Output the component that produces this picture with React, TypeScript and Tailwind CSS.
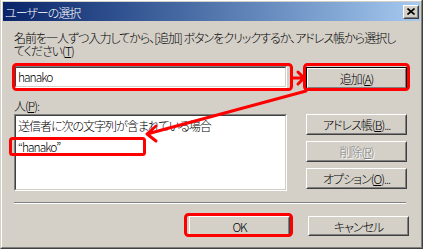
import React from "react";

const FONT =
  "font-['Noto_Sans_CJK_JP','Liberation_Sans',sans-serif] font-light [font-feature-settings:'palt'] tracking-[-1px]";

function U({ children }: { children: React.ReactNode }) {
  return <span className="underline underline-offset-[1px] decoration-1">{children}</span>;
}

function Btn({
  children,
  className = "",
  def = false,
  disabled = false,
}: {
  children: React.ReactNode;
  className?: string;
  def?: boolean;
  disabled?: boolean;
}) {
  const outer = def
    ? "border border-black"
    : "border border-t-white border-l-white border-r-[#404040] border-b-[#404040]";
  const inner = def
    ? "border border-t-white border-l-white border-r-[#808080] border-b-[#808080]"
    : "border border-t-[#D4D0C8] border-l-[#D4D0C8] border-r-[#808080] border-b-[#808080]";
  return (
    <div className={`flex shrink-0 ${outer} ${className}`}>
      <div
        className={`flex flex-1 items-center justify-center ${inner} text-[12px] leading-[13px] ${
          disabled ? "text-[#808080] [text-shadow:1px_1px_0_#ffffff]" : "text-black"
        }`}
      >
        {children}
      </div>
    </div>
  );
}

function Sunken({ children, className = "" }: { children?: React.ReactNode; className?: string }) {
  return (
    <div
      className={`flex border border-t-[#808080] border-l-[#808080] border-r-white border-b-white ${className}`}
    >
      <div className="flex-1 border border-t-[#404040] border-l-[#404040] border-r-[#D4D0C8] border-b-[#D4D0C8] bg-white">
        {children}
      </div>
    </div>
  );
}

export default function App() {
  return (
    <div className={`relative w-[423px] h-[249px] overflow-hidden ${FONT}`}>
      <div className="w-full h-full bg-[#D4D0C8] border-l border-l-[#D4D0C8] border-r border-r-[#404040] border-b border-b-[#404040]">
        <div className="flex flex-col h-full border-l border-l-white border-t border-t-white border-r border-r-[#808080] border-b border-b-[#808080] p-px">
          {/* Title bar */}
          <div className="flex items-center h-[19px] bg-linear-to-r from-[#0A246A] to-[#A6CAF0] pl-[2px] pr-[1px]">
            <span className="text-white text-[12px] leading-[13px] pt-[2px] flex-1">ユーザーの選択</span>
            <div className="flex w-[16px] h-[14px] border border-t-white border-l-white border-r-[#404040] border-b-[#404040] bg-[#D4D0C8]">
              <div className="flex flex-1 items-center justify-center border border-t-[#D4D0C8] border-l-[#D4D0C8] border-r-[#808080] border-b-[#808080]">
                <svg width="8" height="7" viewBox="0 0 8 7">
                  <path d="M0.5 0.5 L7.5 6.5 M7.5 0.5 L0.5 6.5" stroke="black" strokeWidth="1.6" />
                </svg>
              </div>
            </div>
          </div>

          {/* Body */}
          <div className="flex flex-col pl-[11px] pr-[10px] text-black">
            <p className="mt-[10px] text-[12px] leading-[13px] whitespace-nowrap">
              名前を一人ずつ入力してから、[追加] ボタンをクリックするか、アドレス帳から選択し
              <br />
              てください(<U>T</U>)
            </p>

            <div className="flex items-start mt-[9px] gap-[19px]">
              <Sunken className="w-[273px] h-[22px]">
                <div className="pl-[2px] pt-[2px] text-[12px] leading-[14px]">hanako</div>
              </Sunken>
              <Btn def className="w-[101px] h-[22px] mt-px">
                追加(<U>A</U>)
              </Btn>
            </div>

            <div className="mt-[10px] text-[12px] leading-[13px]">
              人(<U>P</U>):
            </div>

            <div className="flex items-start mt-[2px] gap-[19px]">
              <Sunken className="w-[273px] h-[77px]">
                <div className="flex flex-col pl-[2px] pt-[3px] text-[12px] leading-[13px]">
                  <div>送信者に次の文字列が含まれている場合</div>
                  <div className="mt-[8px]">“hanako”</div>
                </div>
              </Sunken>
              <div className="flex flex-col gap-[6px]">
                <Btn className="w-[101px] h-[21px]">
                  アドレス帳(<U>B</U>)...
                </Btn>
                <Btn disabled className="w-[101px] h-[21px]">
                  削除(<U>R</U>)
                </Btn>
                <Btn className="w-[101px] h-[21px]">
                  オプション(<U>O</U>)...
                </Btn>
              </div>
            </div>

            <div className="mt-[11px] w-[392px] h-[2px] border-t border-t-[#808080] border-b border-b-white" />

            <div className="flex justify-end gap-[18px] mt-[12px] pr-[1px]">
              <Btn className="w-[101px] h-[20px]">OK</Btn>
              <Btn className="w-[101px] h-[20px]">キャンセル</Btn>
            </div>
          </div>
        </div>
      </div>

      {/* Red annotations overlay */}
      <svg
        className="absolute inset-0 pointer-events-none"
        width="423"
        height="249"
        viewBox="0 0 423 249"
      >
        <g fill="none" stroke="#FF0000" strokeWidth="3" strokeLinejoin="round" strokeLinecap="round">
          <rect x="13.5" y="64.5" width="278" height="25" rx="3" />
          <rect x="304.5" y="64.5" width="104" height="25" rx="3" />
          <rect x="10.5" y="138.5" width="134" height="16" rx="2" />
          <rect x="185.5" y="214.5" width="106" height="21" rx="3" />
          <path d="M293 78 L304 78 M298 72 L304 78 L298 84" />
          <path d="M306 91 L147 134 M156 126 L147 134 L156 141" />
        </g>
      </svg>
    </div>
  );
}
